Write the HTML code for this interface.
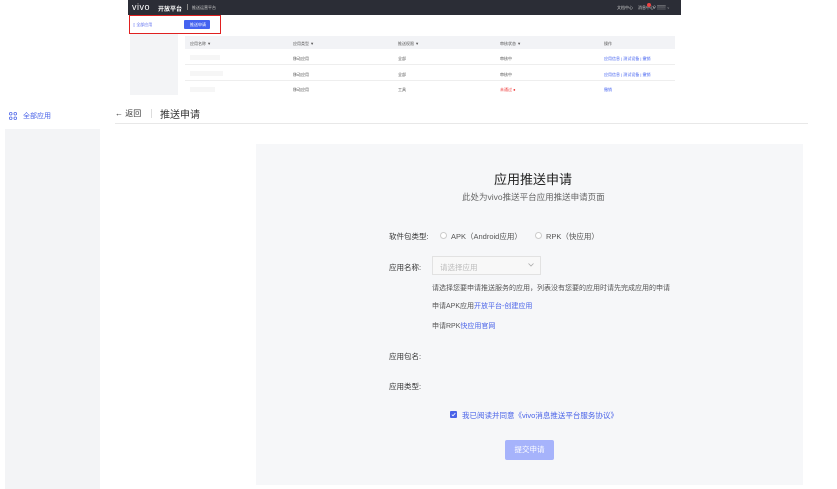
<!DOCTYPE html>
<html><head><meta charset="utf-8"><style>
*{margin:0;padding:0;box-sizing:border-box}
body{width:837px;height:489px;background:#fff;position:relative;overflow:hidden;font-family:"Liberation Sans","Noto Sans CJK SC",sans-serif;color:#333}
.a{position:absolute;white-space:nowrap}
.t{font-size:8px;color:#555;transform:scale(0.5);transform-origin:0 0}
</style></head><body>
<!-- mini screenshot -->
<div class="a" style="left:128px;top:0;width:553px;height:15px;background:#2b2d36"></div>
<div class="a" style="left:132px;top:2px;color:#fff;font-size:9px;letter-spacing:0.5px">vivo</div>
<div class="a" style="left:158px;top:4px;color:#fff;font-size:6px;font-weight:bold">开放平台</div>
<div class="a" style="left:187px;top:4px;width:1px;height:6px;background:#888"></div>
<div class="a t" style="left:192px;top:5px;color:#ccc">推送运营平台</div>
<div class="a t" style="left:617px;top:5px;color:#ccc">文档中心</div>
<div class="a t" style="left:638px;top:5px;color:#ccc">消息中心</div>
<div class="a t" style="left:653px;top:5px;color:#ccc">⚲ ▒▒▒ ⌄</div>
<div class="a" style="left:647px;top:3px;width:4px;height:4px;border-radius:2px;background:#e44"></div>
<div class="a" style="left:130px;top:34px;width:48px;height:61px;background:#f3f4f6"></div>
<div class="a" style="left:129px;top:15px;width:92px;height:19px;border:1.5px solid #e02020"></div>
<div class="a t" style="left:133px;top:22px;color:#5a6cf0">▯ 全部应用</div>
<div class="a" style="left:184px;top:20px;width:26px;height:9px;background:#4563f0;border-radius:1px"></div>
<div class="a t" style="left:190px;top:22px;color:#fff">推送申请</div>
<div class="a" style="left:185px;top:36px;width:490px;height:13px;background:#f2f3f6"></div>
<div class="a t" style="left:190px;top:41px">应用名称 ▼</div>
<div class="a t" style="left:293px;top:41px">应用类型 ▼</div>
<div class="a t" style="left:398px;top:41px">推送权限 ▼</div>
<div class="a t" style="left:500px;top:41px">审核状态 ▼</div>
<div class="a t" style="left:604px;top:41px">操作</div>
<div class="a" style="left:185px;top:64px;width:490px;height:1px;background:#eee"></div>
<div class="a" style="left:185px;top:80px;width:490px;height:1px;background:#eee"></div>
<div class="a t" style="left:293px;top:56px">移动应用</div><div class="a t" style="left:398px;top:56px">全部</div><div class="a t" style="left:500px;top:56px">审核中</div><div class="a t" style="left:604px;top:56px;color:#4563f0">应用信息 | 测试设备 | 撤销</div>
<div class="a t" style="left:293px;top:72px">移动应用</div><div class="a t" style="left:398px;top:72px">全部</div><div class="a t" style="left:500px;top:72px">审核中</div><div class="a t" style="left:604px;top:72px;color:#4563f0">应用信息 | 测试设备 | 撤销</div>
<div class="a t" style="left:293px;top:87px">移动应用</div><div class="a t" style="left:398px;top:87px">工具</div><div class="a t" style="left:500px;top:87px;color:#e33">未通过 ●</div><div class="a t" style="left:604px;top:87px;color:#4563f0">撤销</div>
<div class="a" style="left:190px;top:55px;width:30px;height:5px;background:#f6f6f6"></div>
<div class="a" style="left:190px;top:71px;width:33px;height:5px;background:#f6f6f6"></div>
<div class="a" style="left:190px;top:87px;width:25px;height:5px;background:#f6f6f6"></div>

<!-- main page -->
<svg class="a" style="left:9px;top:112px" width="8" height="8" viewBox="0 0 8 8"><g fill="none" stroke="#4a63e8" stroke-width="0.8"><rect x="0.5" y="0.5" width="2.5" height="2.5" rx="1"/><rect x="5" y="0.5" width="2.5" height="2.5" rx="1"/><rect x="0.5" y="5" width="2.5" height="2.5" rx="1"/><rect x="5" y="5" width="2.5" height="2.5" rx="1"/></g></svg>
<div class="a" style="left:23px;top:111px;font-size:7px;color:#4a63e8">全部应用</div>
<div class="a" style="left:5px;top:129px;width:95px;height:360px;background:#f3f4f6"></div>
<div class="a" style="left:115px;top:108px;font-size:8px;color:#333">← 返回</div>
<div class="a" style="left:151px;top:109px;width:1px;height:9px;background:#ddd"></div>
<div class="a" style="left:160px;top:106px;font-size:10px;color:#333">推送申请</div>
<div class="a" style="left:115px;top:123px;width:693px;height:1px;background:#e8e8e8"></div>

<div class="a" style="left:256px;top:144px;width:547px;height:341px;background:#f6f7f9"></div>
<div class="a" style="left:494px;top:169px;font-size:13px;color:#222">应用推送申请</div>
<div class="a" style="left:462px;top:191px;font-size:8.5px;color:#666">此处为vivo推送平台应用推送申请页面</div>
<div class="a" style="left:389px;top:231px;font-size:7.5px;color:#333">软件包类型:</div>
<div class="a" style="left:440px;top:232px;width:7px;height:7px;border-radius:50%;border:1px solid #ccc;background:#fff"></div>
<div class="a" style="left:451px;top:231px;font-size:7.5px;color:#555">APK（Android应用）</div>
<div class="a" style="left:535px;top:232px;width:7px;height:7px;border-radius:50%;border:1px solid #ccc;background:#fff"></div>
<div class="a" style="left:546px;top:231px;font-size:7.5px;color:#555">RPK（快应用）</div>
<div class="a" style="left:389px;top:262px;font-size:7.5px;color:#333">应用名称:</div>
<div class="a" style="left:432px;top:256px;width:109px;height:19px;border:1px solid #e2e2e2;background:#f8f8f8"></div>
<div class="a" style="left:440px;top:262px;font-size:7.5px;color:#bbb">请选择应用</div>
<svg class="a" style="left:528px;top:263px" width="6" height="4" viewBox="0 0 6 4"><path d="M0.5 0.5L3 3L5.5 0.5" fill="none" stroke="#aaa" stroke-width="0.8"/></svg>
<div class="a" style="left:432px;top:283px;font-size:7px;color:#555">请选择您要申请推送服务的应用，列表没有您要的应用时请先完成应用的申请</div>
<div class="a" style="left:432px;top:301px;font-size:7px;color:#555">申请APK应用<span style="color:#4a63e8">开放平台-创建应用</span></div>
<div class="a" style="left:432px;top:321px;font-size:7px;color:#555">申请RPK<span style="color:#4a63e8">快应用官网</span></div>
<div class="a" style="left:389px;top:351px;font-size:7.5px;color:#333">应用包名:</div>
<div class="a" style="left:389px;top:381px;font-size:7.5px;color:#333">应用类型:</div>
<div class="a" style="left:450px;top:411px;width:7px;height:7px;background:#4a63e8;border-radius:1px"></div>
<svg class="a" style="left:450px;top:411px" width="7" height="7" viewBox="0 0 7 7"><path d="M1.8 3.6L3 4.8L5.3 2.2" fill="none" stroke="#fff" stroke-width="0.8"/></svg>
<div class="a" style="left:462px;top:410px;font-size:7.5px;color:#4a63e8">我已阅读并同意《vivo消息推送平台服务协议》</div>
<div class="a" style="left:505px;top:440px;width:49px;height:20px;background:#a6b3fb;border-radius:2px;color:#fff;font-size:7.5px;line-height:20px;text-align:center">提交申请</div>
</body></html>
